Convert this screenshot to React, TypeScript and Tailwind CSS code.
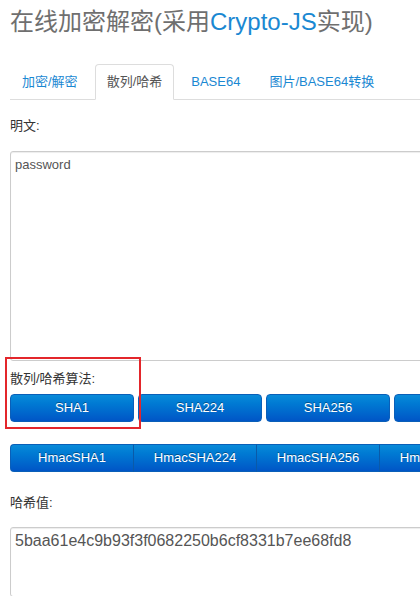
import React from 'react';

const tabs = ['加密/解密', '散列/哈希', 'BASE64', '图片/BASE64转换'];
const hashes = ['SHA1', 'SHA224', 'SHA256', 'SHA384', 'SHA512', 'MD5'];
const hmacs = ['HmacSHA1', 'HmacSHA224', 'HmacSHA256', 'HmacSHA384', 'HmacSHA512'];

const btnBase =
  'h-[28px] shrink-0 flex items-center justify-center text-[13px] text-white bg-gradient-to-b from-[#0a8bd9] to-[#0055c6] [text-shadow:0_-1px_0_rgba(0,0,0,0.35)]';

const App: React.FC = () => {
  return (
    <div className="relative w-[420px] h-[596px] overflow-hidden bg-white font-['Liberation_Sans','Noto_Sans_CJK_SC',sans-serif]">
      <div className="w-[640px] pl-[10px]">
        <h1 className="mt-[4px] text-[24px] leading-[36px] text-[#6f6f6f] font-normal whitespace-nowrap">
          在线加密解密(采用<span className="text-[#1a88d2]">Crypto-JS</span>实现)
        </h1>

        <div className="mt-[24px] flex gap-[5px] border-b border-[#ddd]">
          {tabs.map((t, i) => (
            <div
              key={t}
              className={
                i === 1
                  ? '-mb-px h-[36px] px-[11px] flex items-center text-[13px] text-[#555] bg-white border border-[#ddd] border-b-white rounded-t-[4px] whitespace-nowrap'
                  : 'h-[35px] px-[11px] flex items-center text-[13px] text-[#1a88d2] border border-transparent whitespace-nowrap'
              }
            >
              {t}
            </div>
          ))}
        </div>

        <div className="mt-[16px] text-[13px] leading-[20px] text-[#333]">明文:</div>
        <textarea
          readOnly
          defaultValue="password"
          className="mt-[15px] block w-[600px] h-[210px] resize-none px-[4px] py-[4px] text-[13px] leading-[18px] text-[#555] border border-[#ccc] rounded-[3px] shadow-[inset_0_1px_1px_rgba(0,0,0,0.075)] outline-none"
        />

        <div className="mt-[8px] text-[13px] leading-[20px] text-[#333]">散列/哈希算法:</div>
        <div className="mt-[5px] flex gap-[4px]">
          {hashes.map((h) => (
            <div key={h} className={`${btnBase} w-[124px] rounded-[4px] border border-[#0a5fb8]`}>
              {h}
            </div>
          ))}
        </div>

        <div className="mt-[22px] flex">
          {hmacs.map((h, i) => (
            <div
              key={h}
              className={`${btnBase} w-[123px] border-y border-[#0a5fb8] ${
                i === 0 ? 'border-l rounded-l-[4px]' : 'border-l border-l-[#0a5aa8]'
              }`}
            >
              {h}
            </div>
          ))}
        </div>

        <div className="mt-[21px] text-[13px] leading-[20px] text-[#333]">哈希值:</div>
        <textarea
          readOnly
          defaultValue="5baa61e4c9b93f3f0682250b6cf8331b7ee68fd8"
          className="mt-[14px] block w-[600px] h-[70px] resize-none px-[4px] py-[3px] text-[16px] leading-[20px] text-[#555] border border-[#ccc] rounded-[3px] shadow-[inset_0_1px_1px_rgba(0,0,0,0.075)] outline-none"
        />
      </div>

      <div className="absolute left-[5px] top-[357px] w-[136px] h-[72px] border-2 border-[#e3262b] pointer-events-none" />
    </div>
  );
};

export default App;
